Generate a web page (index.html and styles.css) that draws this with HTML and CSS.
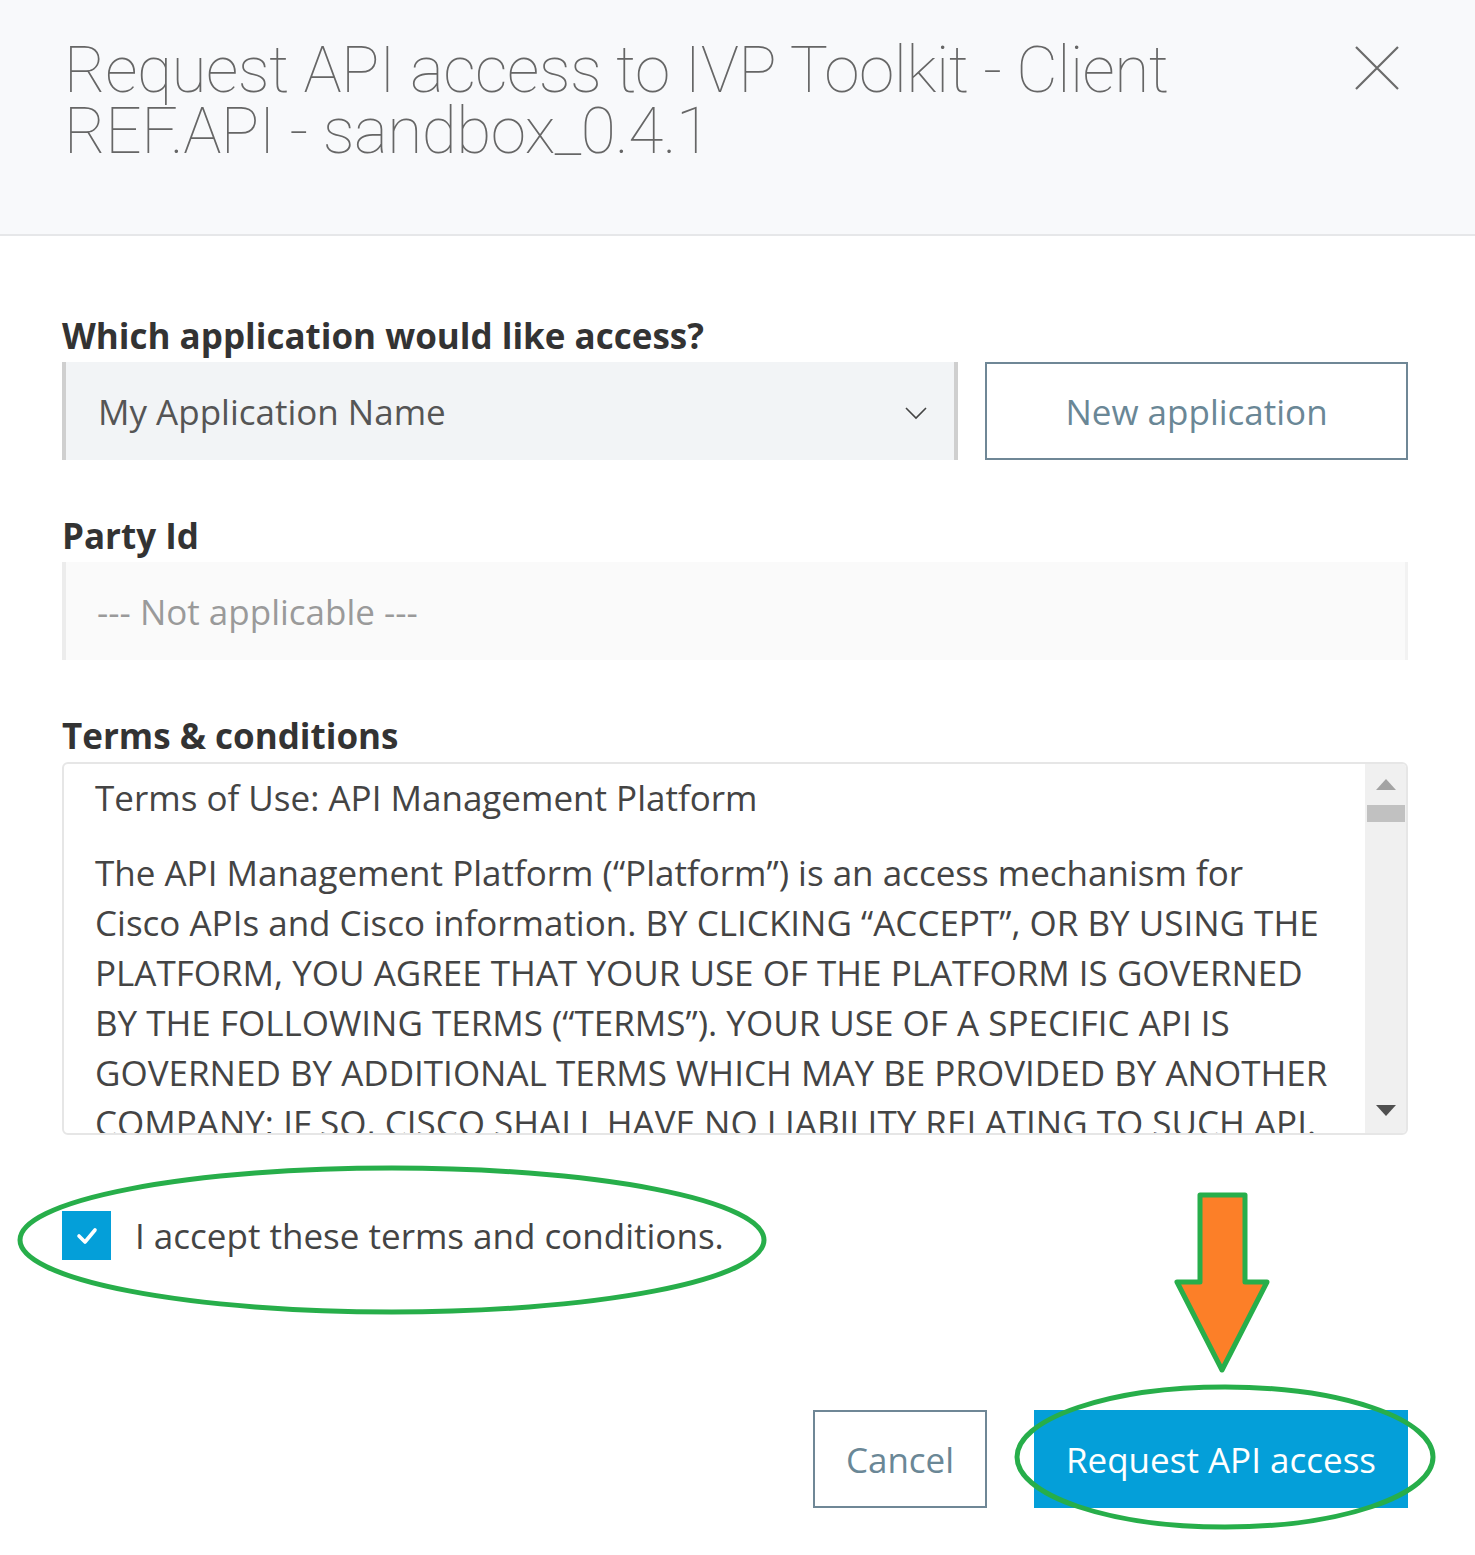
FILE: index.html
```
<!DOCTYPE html>
<html lang="en">
<head>
<meta charset="utf-8">
<title>Request API access</title>
<link rel="stylesheet" href="styles.css">
</head>
<body>
<div class="modal">
  <header class="modal-header">
    <h1 class="modal-title">Request API access to IVP Toolkit - Client REF.API - sandbox_0.4.1</h1>
    <button class="close-btn" aria-label="Close">
      <svg width="44" height="44" viewBox="0 0 44 44"><path d="M1 1 L43 43 M43 1 L1 43" stroke="#6b6b6b" stroke-width="2.2" fill="none"/></svg>
    </button>
  </header>
  <div class="modal-body">
    <div class="field">
      <label class="field-label">Which application would like access?</label>
      <div class="app-row">
        <div class="select">
          <span>My Application Name</span>
          <svg class="chevron" width="22" height="14" viewBox="0 0 22 14"><path d="M1 2 L11 12 L21 2" stroke="#444" stroke-width="1.6" fill="none"/></svg>
        </div>
        <button class="btn btn-outline btn-new">New application</button>
      </div>
    </div>
    <div class="field">
      <label class="field-label">Party Id</label>
      <div class="input-disabled">--- Not applicable ---</div>
    </div>
    <div class="field">
      <label class="field-label">Terms &amp; conditions</label>
      <div class="terms">
        <div class="terms-text">
          <p>Terms of Use: API Management Platform</p>
          <p>The API Management Platform (“Platform”) is an access mechanism for Cisco APIs and Cisco information. BY CLICKING “ACCEPT”, OR BY USING THE PLATFORM, YOU AGREE THAT YOUR USE OF THE PLATFORM IS GOVERNED BY THE FOLLOWING TERMS (“TERMS”). YOUR USE OF A SPECIFIC API IS GOVERNED BY ADDITIONAL TERMS WHICH MAY BE PROVIDED BY ANOTHER COMPANY; IF SO, CISCO SHALL HAVE NO LIABILITY RELATING TO SUCH API.</p>
        </div>
        <div class="scrollbar">
          <span class="sb-up"></span>
          <span class="sb-thumb"></span>
          <span class="sb-track"></span>
          <span class="sb-down"></span>
        </div>
      </div>
    </div>
    <div class="accept">
      <span class="checkbox">
        <svg width="22" height="18" viewBox="0 0 22 18"><path d="M3 9 L9 15 L19 3" stroke="#fff" stroke-width="3.6" fill="none" stroke-linecap="round" stroke-linejoin="round"/></svg>
      </span>
      <span class="accept-text">I accept these terms and conditions.</span>
    </div>
    <div class="footer">
      <button class="btn btn-outline btn-cancel">Cancel</button>
      <button class="btn btn-primary">Request API access</button>
    </div>
  </div>
  <svg class="annotations" width="1475" height="1555" viewBox="0 0 1475 1555">
    <ellipse cx="392" cy="1240" rx="372" ry="72" fill="none" stroke="#27ae4a" stroke-width="5"/>
    <polygon points="1200,1195 1245,1195 1245,1282 1267,1282 1222,1370 1177,1282 1200,1282" fill="#fc7f28" stroke="#27ae4a" stroke-width="5" stroke-linejoin="round"/>
    <ellipse cx="1225" cy="1457" rx="208" ry="70" fill="none" stroke="#27ae4a" stroke-width="5"/>
  </svg>
</div>
</body>
</html>
```
FILE: styles.css
```
html, body {
  margin: 0;
  padding: 0;
  background: #ffffff;
}
body {
  font-family: "Open Sans", "Liberation Sans", sans-serif;
  color: #333;
}
.modal {
  position: relative;
  width: 1475px;
  min-height: 1555px;
}
.modal-header {
  display: flex;
  justify-content: space-between;
  align-items: flex-start;
  background: #f8f9fb;
  border-bottom: 2px solid #e6e7e9;
  height: 236px;
  box-sizing: border-box;
  padding: 40px 76px 0 64px;
}
.modal-title {
  margin: 0;
  font-family: "Roboto", "Liberation Sans", sans-serif;
  font-weight: 100;
  font-size: 64px;
  line-height: 61px;
  letter-spacing: -0.55px;
  color: #666;
  width: 1160px;
}
.close-btn {
  background: none;
  border: 0;
  padding: 0;
  margin-top: 6px;
  width: 44px;
  height: 44px;
  cursor: pointer;
}
.close-btn svg { display: block; }
.modal-body {
  padding: 80px 67px 0 62px;
}
.field {
  margin-bottom: 56px;
}
.field-label {
  display: block;
  font-weight: 700;
  font-size: 35px;
  line-height: 40px;
  color: #333;
  margin-bottom: 6px;
}
.app-row {
  display: flex;
  gap: 27px;
}
.select {
  flex: 0 0 896px;
  box-sizing: border-box;
  height: 98px;
  background: #f2f4f6;
  border-left: 4px solid #cfcfcf;
  border-right: 4px solid #cfcfcf;
  display: flex;
  align-items: center;
  justify-content: space-between;
  padding: 0 27px 0 32px;
  font-size: 35px;
  color: #555;
}
.chevron { display: block; margin-top: 4px; }
.btn {
  font-family: "Open Sans", "Liberation Sans", sans-serif;
  font-size: 35px;
  height: 98px;
  box-sizing: border-box;
  cursor: pointer;
}
.btn-outline {
  background: #fff;
  border: 2px solid #6f8796;
  color: #6a8796;
}
.btn-new {
  flex: 1;
}
.input-disabled {
  box-sizing: border-box;
  height: 98px;
  background: #fafafa;
  border-left: 4px solid #ececec;
  border-right: 3px solid #f2f2f2;
  display: flex;
  align-items: center;
  padding-left: 31px;
  font-size: 35px;
  color: #9a9a9a;
}
.terms {
  box-sizing: border-box;
  height: 373px;
  border: 2px solid #e6e6e6;
  border-radius: 6px;
  display: flex;
  overflow: hidden;
}
.terms-text {
  flex: 1;
  overflow: hidden;
  padding: 9px 30px 0 31px;
  font-size: 35px;
  line-height: 50px;
  color: #444;
}
.terms-text p {
  margin: 0 0 25px;
}
.scrollbar {
  flex: 0 0 41px;
  background: #f0f0f0;
  display: flex;
  flex-direction: column;
  align-items: center;
}
.sb-up {
  margin-top: 15px;
  width: 0;
  height: 0;
  border-left: 10px solid transparent;
  border-right: 10px solid transparent;
  border-bottom: 11px solid #a3a3a3;
}
.sb-thumb {
  margin-top: 15px;
  width: 38px;
  height: 17px;
  background: #c1c1c1;
}
.sb-track { flex: 1; }
.sb-down {
  margin-bottom: 17px;
  width: 0;
  height: 0;
  border-left: 10px solid transparent;
  border-right: 10px solid transparent;
  border-top: 11px solid #505050;
}
.accept {
  display: flex;
  align-items: center;
  gap: 24px;
  margin-top: -56px;
  padding-top: 76px;
}
.checkbox {
  width: 49px;
  height: 49px;
  background: #049fd9;
  display: flex;
  align-items: center;
  justify-content: center;
}
.checkbox svg { display: block; }
.accept-text {
  font-size: 35px;
  color: #444;
}
.footer {
  display: flex;
  justify-content: flex-end;
  gap: 47px;
  margin-top: 150px;
}
.btn-cancel {
  width: 174px;
}
.btn-primary {
  width: 374px;
  background: #049fd9;
  border: 0;
  color: #fff;
}
.annotations {
  position: absolute;
  left: 0;
  top: 0;
  pointer-events: none;
}
```
